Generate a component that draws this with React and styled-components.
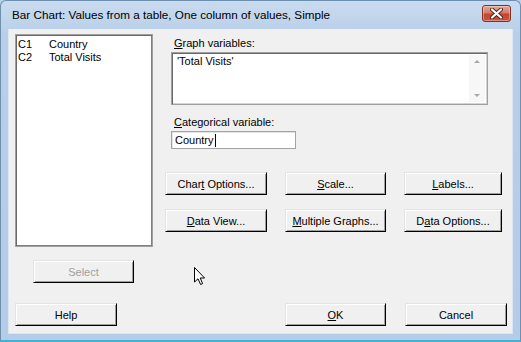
import React from 'react'
import styled, { createGlobalStyle } from 'styled-components'

const Global = createGlobalStyle`
  html, body { margin: 0; padding: 0; background: #b9d1ea; }
  body { font-family: Tahoma, "Liberation Sans", Arial, sans-serif; font-size: 11px; color: #000; }
`

const Window = styled.div`
  position: relative;
  width: 521px;
  height: 342px;
  box-sizing: border-box;
  display: flex;
  flex-direction: column;
  background: linear-gradient(180deg, #c9dbef 0%, #b8cfe9 10%, #b4cce8 100%);
  border: 1px solid #6f8fb0;
  border-bottom: 2px solid #3fb2d6;
  border-radius: 6px 6px 0 0;
  padding: 0 7px 6px 7px;
`

const TitleBar = styled.div`
  height: 29px;
  display: flex;
  align-items: center;
  justify-content: space-between;
  padding-left: 4px;
`

const Title = styled.div`
  font-family: "Liberation Sans", Arial, sans-serif;
  font-size: 11.7px;
  color: #000;
  margin-top: -2px;
`

const CloseBtn = styled.div`
  width: 29px;
  height: 17px;
  box-sizing: border-box;
  margin-right: 2px;
  margin-top: -4px;
  border: 1px solid #7c3226;
  border-radius: 3px;
  background: linear-gradient(180deg, #e6a89b 0%, #d77a69 45%, #c2452f 55%, #c8553d 100%);
  box-shadow: inset 0 0 0 1px rgba(255,255,255,0.35);
  display: flex;
  align-items: center;
  justify-content: center;
`

const Client = styled.div`
  flex: 1;
  background: #f0f0f0;
  display: flex;
  flex-direction: column;
  padding: 5px 0 7px 6px;
  border: 1px solid #dbe6f3;
  border-top: none;
`

const Top = styled.div`
  display: flex;
  flex: 1;
`

const LeftCol = styled.div`
  display: flex;
  flex-direction: column;
  width: 138px;
`

const ListBox = styled.div`
  height: 213px;
  box-sizing: border-box;
  background: #fff;
  border: 1px solid #a0a0a0;
  box-shadow: inset 1px 1px 0 #696969, inset -1px -1px 0 #808080;
  padding: 3px 2px;
`

const ListRow = styled.div`
  display: flex;
  height: 13px;
  line-height: 13px;
`

const ColId = styled.span`
  width: 31px;
`

const RightCol = styled.div`
  display: flex;
  flex-direction: column;
  margin-left: 12px;
`

const FieldLabel = styled.div`
  height: 13px;
  line-height: 13px;
  margin: ${p => p.$top}px 0 2px 9px;
`

const U = styled.span`
  text-decoration: underline;
  text-underline-offset: 1px;
`

const MultiBox = styled.div`
  width: 317px;
  height: 53px;
  margin-left: 6px;
  box-sizing: border-box;
  background: #fff;
  border: 1px solid #a0a0a0;
  box-shadow: inset 1px 1px 0 #696969, inset -1px -1px 0 #d4d4d4;
  display: flex;
`

const MultiText = styled.div`
  flex: 1;
  padding: 2px 5px;
  line-height: 13px;
`

const ScrollBar = styled.div`
  width: 16px;
  margin: 2px 2px 2px 0;
  background: #f7f7f7;
  display: flex;
  flex-direction: column;
  justify-content: space-between;
  align-items: center;
  padding: 5px 0;
  box-sizing: border-box;
`

const Arrow = styled.div`
  width: 0;
  height: 0;
  border-left: 3px solid transparent;
  border-right: 3px solid transparent;
  ${p => p.$up ? 'border-bottom: 3px solid #a8a8a8;' : 'border-top: 3px solid #a8a8a8;'}
`

const TextBox = styled.div`
  width: 125px;
  height: 18px;
  margin-left: 6px;
  box-sizing: border-box;
  background: #fff;
  border: 1px solid #a5a5a5;
  box-shadow: inset 1px 1px 0 #e3e3e3;
  padding: 0 3px;
  line-height: 16px;
  display: flex;
  align-items: center;
`

const Caret = styled.span`
  display: inline-block;
  width: 1px;
  height: 13px;
  background: #000;
  margin-left: 1px;
`

const ButtonGrid = styled.div`
  display: grid;
  grid-template-columns: 102px 101px 98px;
  column-gap: 18px;
  row-gap: 14px;
  margin-top: 23px;
`

const Button = styled.div`
  width: ${p => p.$w || 102}px;
  height: 23px;
  box-sizing: border-box;
  background: #f0f0f0;
  border: 1px solid;
  border-color: #e3e3e3 #000 #000 #e3e3e3;
  box-shadow: inset 1px 1px 0 #fff, inset -1px -1px 0 #a0a0a0;
  display: flex;
  align-items: center;
  justify-content: center;
  color: ${p => p.$disabled ? '#a0a0a0' : '#000'};
`

const SelectWrap = styled.div`
  margin: 13px 0 0 18px;
`

const Bottom = styled.div`
  display: flex;
  margin-top: 20px;
`

const Spacer = styled.div`
  width: ${p => p.$w}px;
`

const Cursor = styled.svg`
  position: absolute;
  left: 192px;
  top: 265px;
`

export default function App() {
  return (
    <>
      <Global />
      <Window>
        <TitleBar>
          <Title>Bar Chart: Values from a table, One column of values, Simple</Title>
          <CloseBtn>
            <svg width="13" height="11" viewBox="0 0 13 11">
              <path d="M2 1.5 L6.5 5.5 L11 1.5 M2 9.5 L6.5 5.5 L11 9.5" stroke="#5a2018" strokeWidth="4" strokeLinecap="round" fill="none" />
              <path d="M2 1.5 L6.5 5.5 L11 1.5 M2 9.5 L6.5 5.5 L11 9.5" stroke="#fff" strokeWidth="2.2" strokeLinecap="round" fill="none" />
            </svg>
          </CloseBtn>
        </TitleBar>
        <Client>
          <Top>
            <LeftCol>
              <ListBox>
                <ListRow><ColId>C1</ColId><span>Country</span></ListRow>
                <ListRow><ColId>C2</ColId><span>Total Visits</span></ListRow>
              </ListBox>
              <SelectWrap>
                <Button $w={101} $disabled>Select</Button>
              </SelectWrap>
            </LeftCol>
            <RightCol>
              <FieldLabel $top={3}><U>G</U>raph variables:</FieldLabel>
              <MultiBox>
                <MultiText>'Total Visits'</MultiText>
                <ScrollBar>
                  <Arrow $up />
                  <Arrow />
                </ScrollBar>
              </MultiBox>
              <FieldLabel $top={11}><U>C</U>ategorical variable:</FieldLabel>
              <TextBox>Country<Caret /></TextBox>
              <ButtonGrid>
                <Button>Char<U>t</U>&nbsp;Options...</Button>
                <Button $w={101}><U>S</U>cale...</Button>
                <Button $w={98}><U>L</U>abels...</Button>
                <Button><U>D</U>ata View...</Button>
                <Button $w={101}><U>M</U>ultiple Graphs...</Button>
                <Button $w={98}>D<U>a</U>ta Options...</Button>
              </ButtonGrid>
            </RightCol>
          </Top>
          <Bottom>
            <Button>Help</Button>
            <Spacer $w={168} />
            <Button $w={101}><U>O</U>K</Button>
            <Spacer $w={19} />
            <Button>Cancel</Button>
          </Bottom>
        </Client>
        <Cursor width="13" height="20" viewBox="0 0 13 20">
          <path d="M1.5 1.5 L1.5 16 L5 12.8 L7.6 18.5 L9.6 17.6 L7.2 12 L11.6 12 Z" fill="#fff" stroke="#000" strokeWidth="1" strokeLinejoin="miter" />
        </Cursor>
      </Window>
    </>
  )
}
